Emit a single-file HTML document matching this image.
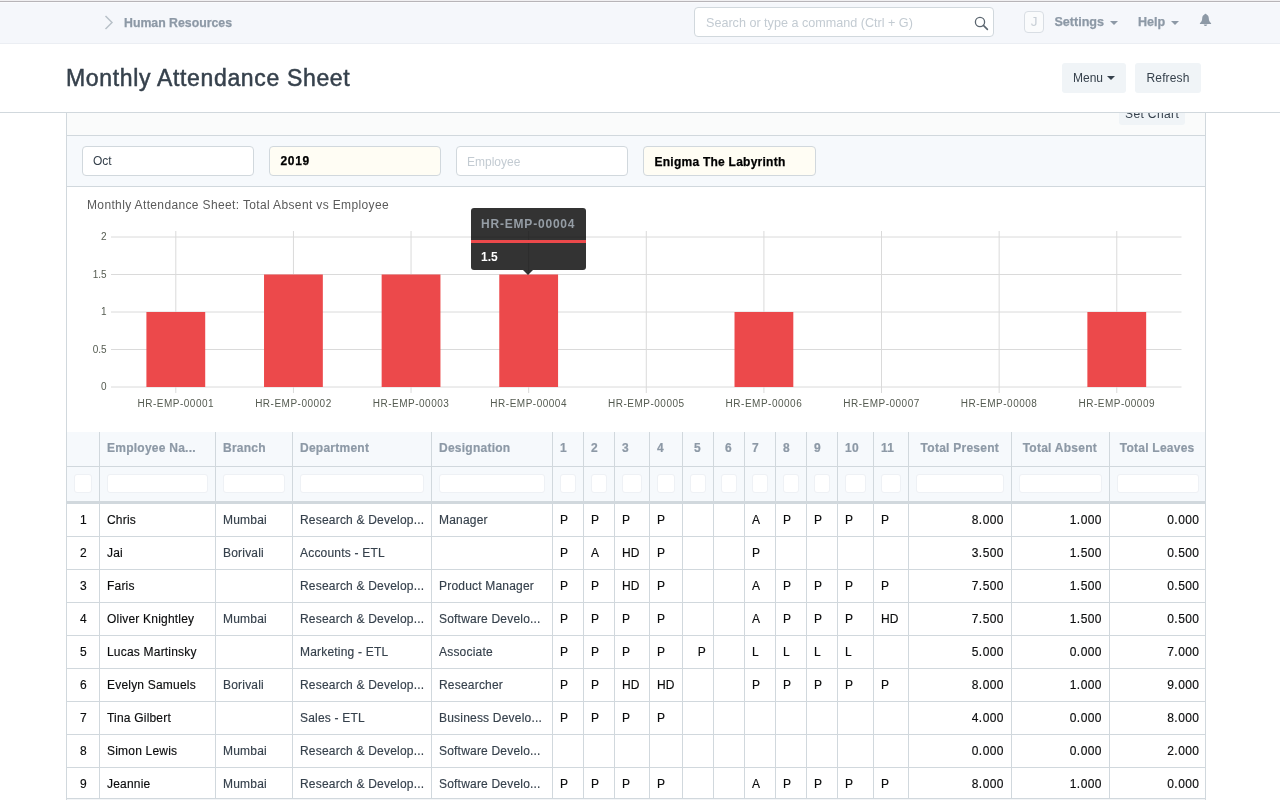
<!DOCTYPE html>
<html>
<head>
<meta charset="utf-8">
<title>Monthly Attendance Sheet</title>
<style>
*{box-sizing:border-box;margin:0;padding:0}
body{will-change:transform}
html,body{width:1280px;height:800px;overflow:hidden;background:#fff;font-family:"Liberation Sans",sans-serif;color:#36414c}
.abs{position:absolute}
#topline0{left:0;top:0;width:1280px;height:1px;background:#f0eff1}
#topline1{left:0;top:1px;width:1280px;height:1px;background:#b7b4b8}
#topline2{left:0;top:2px;width:1280px;height:1px;background:#fafbfd}
#navbar{left:0;top:3px;width:1280px;height:41px;background:#f5f7fb;border-bottom:1px solid #ebeef3}
.navtxt{-webkit-text-stroke:0.25px #8d99a6;font-weight:bold;font-size:12.6px;color:#8d99a6;white-space:nowrap;line-height:16px}
#search{left:694px;top:7px;width:300px;height:30px;background:#fff;border:1px solid #d1d8dd;border-radius:4px}
#search span{position:absolute;left:11px;top:7px;font-size:12.6px;color:#c3cbd2;white-space:nowrap;line-height:16px}
#avatar{left:1024px;top:11px;width:20px;height:22px;border:1px solid #d9dee4;border-radius:4px;background:#fafbfc;color:#c8cfd6;font-size:13.5px;text-align:center;line-height:19px}
.caret{position:absolute;width:0;height:0;border-left:4px solid transparent;border-right:4px solid transparent;border-top:4px solid #8d99a6}
#pagehead{left:0;top:44px;width:1280px;height:69px;background:#fff;border-bottom:1px solid #d1d8dd}
#title{left:66px;top:63px;font-size:23px;letter-spacing:0.66px;-webkit-text-stroke:0.5px #36414c;color:#36414c;white-space:nowrap;line-height:30px}
.btn{position:absolute;background:#f0f4f7;border-radius:3px;font-size:12px;color:#36414c;line-height:16px;white-space:nowrap}
#container{left:66px;top:113px;width:1140px;height:700px;border-left:1px solid #d1d8dd;border-right:1px solid #d1d8dd;background:#fff}
#setchartbar{left:67px;top:113px;width:1138px;height:23px;background:#fafbfb;border-bottom:1px solid #d1d8dd;overflow:hidden}
#filters{left:67px;top:136px;width:1138px;height:51px;background:#f6f9fc;border-bottom:1px solid #d1d8dd}
.inp{position:absolute;top:10px;width:172px;height:30px;background:#fff;border:1px solid #d1d8dd;border-radius:4px;font-size:12px;line-height:16px;padding:6px 10px;white-space:nowrap;color:#36414c}
.inp.req{background:#fffdf4;font-weight:bold;color:#000;letter-spacing:0.25px;-webkit-text-stroke:0.25px #000;padding-left:10.5px}
.inp.ph{color:#c3cbd2}
#charttitle{left:87px;top:197px;font-size:12px;letter-spacing:0.36px;color:#5a5a5a;line-height:16px;white-space:nowrap}

#tip{left:471px;top:208px;width:115px;height:62px;background:rgba(0,0,0,0.8);border-radius:3px;color:#fff}
#tiptitle{position:absolute;left:10px;top:8px;font-size:12px;letter-spacing:0.8px;font-weight:bold;color:#959da5;line-height:16px;white-space:nowrap}
#tipline{position:absolute;left:0;top:32px;width:115px;height:3px;background:#ec494b}
#tipval{position:absolute;left:10px;top:41px;font-size:12px;font-weight:bold;color:#fff;line-height:16px}
#tiparrow{position:absolute;left:52px;top:62px;width:0;height:0;border-left:5px solid transparent;border-right:5px solid transparent;border-top:5px solid rgba(0,0,0,0.8)}
#thead{left:67px;top:432px;width:1138px;height:69px;background:#f6f9fc;border-bottom:0}
#thead:after{content:"";position:absolute;left:0;top:34px;width:1138px;height:1px;background:#d1d8dd}
#thickline{left:67px;top:501px;width:1138px;height:3px;background:#d1d8dd}
.hc{-webkit-text-stroke:0.2px #8d99a6;top:432px;height:34px;padding:8px 7px 0 7px;letter-spacing:0.25px;font-size:12px;font-weight:bold;color:#8d99a6;line-height:16px;white-space:nowrap;overflow:hidden}
.fi{top:474px;height:19px;background:#fff;border:1px solid #eef1f5;border-radius:3px}
.tc{-webkit-text-stroke:0.15px currentColor;height:32px;padding:8px 7px 0 7px;letter-spacing:0.2px;font-size:12px;line-height:16px;white-space:nowrap;overflow:hidden;color:#36414c}
.tc.blk{color:#0b0c0d}
.tc.idx{text-align:center;padding-left:0;padding-right:0}
.r{text-align:right}
.hc.hr{text-align:right;padding-right:12px}
.tc.num{letter-spacing:0.45px;padding-right:7px}
.xl{letter-spacing:0.5px}
.rline{left:67px;width:1138px;height:1px;background:#d1d8dd}
.vline{top:432px;width:1px;height:366px;background:#d1d8dd}
</style>
</head>
<body>
<div class="abs" id="topline0"></div>
<div class="abs" id="topline1"></div>
<div class="abs" id="topline2"></div>
<div class="abs" id="navbar"></div>
<svg class="abs" style="left:104px;top:15px" width="10" height="15" viewBox="0 0 10 15"><path d="M1.5 1 L8 7.5 L1.5 14" fill="none" stroke="#b9c1c9" stroke-width="1.5"/></svg>
<div class="abs navtxt" id="crumb" style="left:124px;top:15px;font-size:12.3px">Human Resources</div>
<div class="abs" id="search"><span>Search or type a command (Ctrl + G)</span>
<svg style="position:absolute;left:279px;top:7.5px" width="15" height="15" viewBox="0 0 15 15"><circle cx="6" cy="6" r="4.6" fill="none" stroke="#5b6670" stroke-width="1.3"/><path d="M9.4 9.4 L13.4 13.4" stroke="#5b6670" stroke-width="1.6" stroke-linecap="round"/></svg>
</div>
<div class="abs" id="avatar">J</div>
<div class="abs navtxt" id="settings" style="left:1054.4px;top:14px">Settings</div>
<div class="caret" style="left:1110px;top:21px"></div>
<div class="abs navtxt" id="help" style="left:1138px;top:14px">Help</div>
<div class="caret" style="left:1171px;top:21px"></div>
<svg class="abs" style="left:1198.6px;top:13px" width="13" height="14" viewBox="0 0 13 14"><path d="M6.5 0.8 C7.2 0.8 7.6 1.2 7.7 1.8 C9.1 2.4 9.7 3.7 9.8 5.2 C9.9 7.4 10.3 8.6 12.1 10.2 L12.1 11 L0.9 11 L0.9 10.2 C2.7 8.6 3.1 7.4 3.2 5.2 C3.3 3.7 3.9 2.4 5.3 1.8 C5.4 1.2 5.8 0.8 6.5 0.8 Z M4.7 11.5 L8.3 11.5 C8.2 12.4 7.4 13 6.5 13 C5.6 13 4.8 12.4 4.7 11.5 Z" fill="#8d99a6"/></svg>

<div class="abs" id="pagehead"></div>
<div class="abs" id="title">Monthly Attendance Sheet</div>
<div class="btn" id="menubtn" style="left:1062px;top:63px;width:64px;height:30px;padding:7px 0 0 11px">Menu</div>
<div class="caret" style="left:1107px;top:76px;border-top-color:#36414c"></div>
<div class="btn" id="refreshbtn" style="left:1135px;top:63px;width:66px;height:30px;padding:7px 0 0 11.5px;letter-spacing:0.15px">Refresh</div>

<div class="abs" id="container"></div>
<div class="abs" id="setchartbar"><div class="btn" style="left:1052px;top:-12px;width:66px;height:24px;padding:5px 0 0 6px;letter-spacing:0.38px;background:#f0f4f7">Set Chart</div></div>
<div class="abs" id="filters">
  <div class="inp" style="left:15px">Oct</div>
  <div class="inp req" style="left:202px;letter-spacing:0.67px">2019</div>
  <div class="inp ph" style="left:389px;padding-top:7px">Employee</div>
  <div class="inp req" style="left:576px;width:173px;padding-top:7px">Enigma The Labyrinth</div>
</div>
<div class="abs" id="charttitle">Monthly Attendance Sheet: Total Absent vs Employee</div>
<svg class="abs" style="left:0;top:190px" width="1280" height="240" viewBox="0 190 1280 240" font-family="Liberation Sans, sans-serif">
<line x1="175.81" x2="175.81" y1="231" y2="393" stroke="#dadada" stroke-width="1"/>
<line x1="293.43" x2="293.43" y1="231" y2="393" stroke="#dadada" stroke-width="1"/>
<line x1="411.05" x2="411.05" y1="231" y2="393" stroke="#dadada" stroke-width="1"/>
<line x1="528.67" x2="528.67" y1="231" y2="393" stroke="#dadada" stroke-width="1"/>
<line x1="646.29" x2="646.29" y1="231" y2="393" stroke="#dadada" stroke-width="1"/>
<line x1="763.91" x2="763.91" y1="231" y2="393" stroke="#dadada" stroke-width="1"/>
<line x1="881.53" x2="881.53" y1="231" y2="393" stroke="#dadada" stroke-width="1"/>
<line x1="999.15" x2="999.15" y1="231" y2="393" stroke="#dadada" stroke-width="1"/>
<line x1="1116.77" x2="1116.77" y1="231" y2="393" stroke="#dadada" stroke-width="1"/>
<line x1="111" x2="1181.5" y1="237" y2="237" stroke="#dadada" stroke-width="1"/>
<text x="106.6" y="240" font-size="10" fill="#555b51" text-anchor="end">2</text>
<line x1="111" x2="1181.5" y1="274.5" y2="274.5" stroke="#dadada" stroke-width="1"/>
<text x="106.6" y="277.5" font-size="10" fill="#555b51" text-anchor="end">1.5</text>
<line x1="111" x2="1181.5" y1="312" y2="312" stroke="#dadada" stroke-width="1"/>
<text x="106.6" y="315" font-size="10" fill="#555b51" text-anchor="end">1</text>
<line x1="111" x2="1181.5" y1="349.5" y2="349.5" stroke="#dadada" stroke-width="1"/>
<text x="106.6" y="352.5" font-size="10" fill="#555b51" text-anchor="end">0.5</text>
<line x1="111" x2="1181.5" y1="387" y2="387" stroke="#dadada" stroke-width="1"/>
<text x="106.6" y="390" font-size="10" fill="#555b51" text-anchor="end">0</text>
<rect x="146.41" y="312.00" width="58.8" height="75.00" fill="#ec494b"/>
<rect x="264.03" y="274.50" width="58.8" height="112.50" fill="#ec494b"/>
<rect x="381.65" y="274.50" width="58.8" height="112.50" fill="#ec494b"/>
<rect x="499.27" y="274.50" width="58.8" height="112.50" fill="#ec494b"/>
<rect x="734.51" y="312.00" width="58.8" height="75.00" fill="#ec494b"/>
<rect x="1087.37" y="312.00" width="58.8" height="75.00" fill="#ec494b"/>
<text x="175.81" y="407" font-size="10" fill="#555b51" text-anchor="middle" class="xl">HR-EMP-00001</text>
<text x="293.43" y="407" font-size="10" fill="#555b51" text-anchor="middle" class="xl">HR-EMP-00002</text>
<text x="411.05" y="407" font-size="10" fill="#555b51" text-anchor="middle" class="xl">HR-EMP-00003</text>
<text x="528.67" y="407" font-size="10" fill="#555b51" text-anchor="middle" class="xl">HR-EMP-00004</text>
<text x="646.29" y="407" font-size="10" fill="#555b51" text-anchor="middle" class="xl">HR-EMP-00005</text>
<text x="763.91" y="407" font-size="10" fill="#555b51" text-anchor="middle" class="xl">HR-EMP-00006</text>
<text x="881.53" y="407" font-size="10" fill="#555b51" text-anchor="middle" class="xl">HR-EMP-00007</text>
<text x="999.15" y="407" font-size="10" fill="#555b51" text-anchor="middle" class="xl">HR-EMP-00008</text>
<text x="1116.77" y="407" font-size="10" fill="#555b51" text-anchor="middle" class="xl">HR-EMP-00009</text>
</svg>
<div class="abs" id="tip"><div id="tiptitle">HR-EMP-00004</div><div id="tipline"></div><div id="tipval">1.5</div><div id="tiparrow"></div></div>
<div class="abs" id="thead"></div>
<div class="abs" id="thickline"></div>
<div class="abs hc" style="left:68px;width:31px"></div>
<div class="abs fi" style="left:74px;width:18px"></div>
<div class="abs hc" style="left:100px;width:115px">Employee Na...</div>
<div class="abs fi" style="left:107px;width:100.5px"></div>
<div class="abs hc" style="left:216px;width:76px">Branch</div>
<div class="abs fi" style="left:223px;width:61.5px"></div>
<div class="abs hc" style="left:293px;width:138px">Department</div>
<div class="abs fi" style="left:300px;width:123.5px"></div>
<div class="abs hc" style="left:432px;width:120px">Designation</div>
<div class="abs fi" style="left:439px;width:105.5px"></div>
<div class="abs hc" style="left:553px;width:30px">1</div>
<div class="abs fi" style="left:560px;width:15.5px"></div>
<div class="abs hc" style="left:584px;width:30px">2</div>
<div class="abs fi" style="left:591px;width:15.5px"></div>
<div class="abs hc" style="left:615px;width:34px">3</div>
<div class="abs fi" style="left:622px;width:19.5px"></div>
<div class="abs hc" style="left:650px;width:32px">4</div>
<div class="abs fi" style="left:657px;width:17.5px"></div>
<div class="abs hc hr" style="left:683px;width:30px">5</div>
<div class="abs fi" style="left:690px;width:15.5px"></div>
<div class="abs hc hr" style="left:714px;width:30px">6</div>
<div class="abs fi" style="left:721px;width:15.5px"></div>
<div class="abs hc" style="left:745px;width:30px">7</div>
<div class="abs fi" style="left:752px;width:15.5px"></div>
<div class="abs hc" style="left:776px;width:30px">8</div>
<div class="abs fi" style="left:783px;width:15.5px"></div>
<div class="abs hc" style="left:807px;width:30px">9</div>
<div class="abs fi" style="left:814px;width:15.5px"></div>
<div class="abs hc" style="left:838px;width:35px">10</div>
<div class="abs fi" style="left:845px;width:20.5px"></div>
<div class="abs hc" style="left:874px;width:34px">11</div>
<div class="abs fi" style="left:881px;width:19.5px"></div>
<div class="abs hc hr" style="left:909px;width:102px">Total Present</div>
<div class="abs fi" style="left:916px;width:87.5px"></div>
<div class="abs hc hr" style="left:1012px;width:97px">Total Absent</div>
<div class="abs fi" style="left:1019px;width:82.5px"></div>
<div class="abs hc hr" style="left:1110px;width:96.5px">Total Leaves</div>
<div class="abs fi" style="left:1117px;width:82.0px"></div>
<div class="abs rline" style="top:536px"></div>
<div class="abs tc idx blk" style="left:68px;top:504px;width:31px">1</div>
<div class="abs tc blk" style="left:100px;top:504px;width:115px">Chris</div>
<div class="abs tc" style="left:216px;top:504px;width:76px">Mumbai</div>
<div class="abs tc" style="left:293px;top:504px;width:138px">Research & Develop...</div>
<div class="abs tc" style="left:432px;top:504px;width:120px">Manager</div>
<div class="abs tc blk" style="left:553px;top:504px;width:30px">P</div>
<div class="abs tc blk" style="left:584px;top:504px;width:30px">P</div>
<div class="abs tc blk" style="left:615px;top:504px;width:34px">P</div>
<div class="abs tc blk" style="left:650px;top:504px;width:32px">P</div>
<div class="abs tc blk" style="left:745px;top:504px;width:30px">A</div>
<div class="abs tc blk" style="left:776px;top:504px;width:30px">P</div>
<div class="abs tc blk" style="left:807px;top:504px;width:30px">P</div>
<div class="abs tc blk" style="left:838px;top:504px;width:35px">P</div>
<div class="abs tc blk" style="left:874px;top:504px;width:34px">P</div>
<div class="abs tc r num blk" style="left:909px;top:504px;width:102px">8.000</div>
<div class="abs tc r num blk" style="left:1012px;top:504px;width:97px">1.000</div>
<div class="abs tc r num blk" style="left:1110px;top:504px;width:96.5px">0.000</div>
<div class="abs rline" style="top:569px"></div>
<div class="abs tc idx blk" style="left:68px;top:537px;width:31px">2</div>
<div class="abs tc blk" style="left:100px;top:537px;width:115px">Jai</div>
<div class="abs tc" style="left:216px;top:537px;width:76px">Borivali</div>
<div class="abs tc" style="left:293px;top:537px;width:138px">Accounts - ETL</div>
<div class="abs tc blk" style="left:553px;top:537px;width:30px">P</div>
<div class="abs tc blk" style="left:584px;top:537px;width:30px">A</div>
<div class="abs tc blk" style="left:615px;top:537px;width:34px">HD</div>
<div class="abs tc blk" style="left:650px;top:537px;width:32px">P</div>
<div class="abs tc blk" style="left:745px;top:537px;width:30px">P</div>
<div class="abs tc r num blk" style="left:909px;top:537px;width:102px">3.500</div>
<div class="abs tc r num blk" style="left:1012px;top:537px;width:97px">1.500</div>
<div class="abs tc r num blk" style="left:1110px;top:537px;width:96.5px">0.500</div>
<div class="abs rline" style="top:602px"></div>
<div class="abs tc idx blk" style="left:68px;top:570px;width:31px">3</div>
<div class="abs tc blk" style="left:100px;top:570px;width:115px">Faris</div>
<div class="abs tc" style="left:293px;top:570px;width:138px">Research & Develop...</div>
<div class="abs tc" style="left:432px;top:570px;width:120px">Product Manager</div>
<div class="abs tc blk" style="left:553px;top:570px;width:30px">P</div>
<div class="abs tc blk" style="left:584px;top:570px;width:30px">P</div>
<div class="abs tc blk" style="left:615px;top:570px;width:34px">HD</div>
<div class="abs tc blk" style="left:650px;top:570px;width:32px">P</div>
<div class="abs tc blk" style="left:745px;top:570px;width:30px">A</div>
<div class="abs tc blk" style="left:776px;top:570px;width:30px">P</div>
<div class="abs tc blk" style="left:807px;top:570px;width:30px">P</div>
<div class="abs tc blk" style="left:838px;top:570px;width:35px">P</div>
<div class="abs tc blk" style="left:874px;top:570px;width:34px">P</div>
<div class="abs tc r num blk" style="left:909px;top:570px;width:102px">7.500</div>
<div class="abs tc r num blk" style="left:1012px;top:570px;width:97px">1.500</div>
<div class="abs tc r num blk" style="left:1110px;top:570px;width:96.5px">0.500</div>
<div class="abs rline" style="top:635px"></div>
<div class="abs tc idx blk" style="left:68px;top:603px;width:31px">4</div>
<div class="abs tc blk" style="left:100px;top:603px;width:115px">Oliver Knightley</div>
<div class="abs tc" style="left:216px;top:603px;width:76px">Mumbai</div>
<div class="abs tc" style="left:293px;top:603px;width:138px">Research & Develop...</div>
<div class="abs tc" style="left:432px;top:603px;width:120px">Software Develo...</div>
<div class="abs tc blk" style="left:553px;top:603px;width:30px">P</div>
<div class="abs tc blk" style="left:584px;top:603px;width:30px">P</div>
<div class="abs tc blk" style="left:615px;top:603px;width:34px">P</div>
<div class="abs tc blk" style="left:650px;top:603px;width:32px">P</div>
<div class="abs tc blk" style="left:745px;top:603px;width:30px">A</div>
<div class="abs tc blk" style="left:776px;top:603px;width:30px">P</div>
<div class="abs tc blk" style="left:807px;top:603px;width:30px">P</div>
<div class="abs tc blk" style="left:838px;top:603px;width:35px">P</div>
<div class="abs tc blk" style="left:874px;top:603px;width:34px">HD</div>
<div class="abs tc r num blk" style="left:909px;top:603px;width:102px">7.500</div>
<div class="abs tc r num blk" style="left:1012px;top:603px;width:97px">1.500</div>
<div class="abs tc r num blk" style="left:1110px;top:603px;width:96.5px">0.500</div>
<div class="abs rline" style="top:668px"></div>
<div class="abs tc idx blk" style="left:68px;top:636px;width:31px">5</div>
<div class="abs tc blk" style="left:100px;top:636px;width:115px">Lucas Martinsky</div>
<div class="abs tc" style="left:293px;top:636px;width:138px">Marketing - ETL</div>
<div class="abs tc" style="left:432px;top:636px;width:120px">Associate</div>
<div class="abs tc blk" style="left:553px;top:636px;width:30px">P</div>
<div class="abs tc blk" style="left:584px;top:636px;width:30px">P</div>
<div class="abs tc blk" style="left:615px;top:636px;width:34px">P</div>
<div class="abs tc blk" style="left:650px;top:636px;width:32px">P</div>
<div class="abs tc r blk" style="left:683px;top:636px;width:30px">P</div>
<div class="abs tc blk" style="left:745px;top:636px;width:30px">L</div>
<div class="abs tc blk" style="left:776px;top:636px;width:30px">L</div>
<div class="abs tc blk" style="left:807px;top:636px;width:30px">L</div>
<div class="abs tc blk" style="left:838px;top:636px;width:35px">L</div>
<div class="abs tc r num blk" style="left:909px;top:636px;width:102px">5.000</div>
<div class="abs tc r num blk" style="left:1012px;top:636px;width:97px">0.000</div>
<div class="abs tc r num blk" style="left:1110px;top:636px;width:96.5px">7.000</div>
<div class="abs rline" style="top:701px"></div>
<div class="abs tc idx blk" style="left:68px;top:669px;width:31px">6</div>
<div class="abs tc blk" style="left:100px;top:669px;width:115px">Evelyn Samuels</div>
<div class="abs tc" style="left:216px;top:669px;width:76px">Borivali</div>
<div class="abs tc" style="left:293px;top:669px;width:138px">Research & Develop...</div>
<div class="abs tc" style="left:432px;top:669px;width:120px">Researcher</div>
<div class="abs tc blk" style="left:553px;top:669px;width:30px">P</div>
<div class="abs tc blk" style="left:584px;top:669px;width:30px">P</div>
<div class="abs tc blk" style="left:615px;top:669px;width:34px">HD</div>
<div class="abs tc blk" style="left:650px;top:669px;width:32px">HD</div>
<div class="abs tc blk" style="left:745px;top:669px;width:30px">P</div>
<div class="abs tc blk" style="left:776px;top:669px;width:30px">P</div>
<div class="abs tc blk" style="left:807px;top:669px;width:30px">P</div>
<div class="abs tc blk" style="left:838px;top:669px;width:35px">P</div>
<div class="abs tc blk" style="left:874px;top:669px;width:34px">P</div>
<div class="abs tc r num blk" style="left:909px;top:669px;width:102px">8.000</div>
<div class="abs tc r num blk" style="left:1012px;top:669px;width:97px">1.000</div>
<div class="abs tc r num blk" style="left:1110px;top:669px;width:96.5px">9.000</div>
<div class="abs rline" style="top:734px"></div>
<div class="abs tc idx blk" style="left:68px;top:702px;width:31px">7</div>
<div class="abs tc blk" style="left:100px;top:702px;width:115px">Tina Gilbert</div>
<div class="abs tc" style="left:293px;top:702px;width:138px">Sales - ETL</div>
<div class="abs tc" style="left:432px;top:702px;width:120px">Business Develo...</div>
<div class="abs tc blk" style="left:553px;top:702px;width:30px">P</div>
<div class="abs tc blk" style="left:584px;top:702px;width:30px">P</div>
<div class="abs tc blk" style="left:615px;top:702px;width:34px">P</div>
<div class="abs tc blk" style="left:650px;top:702px;width:32px">P</div>
<div class="abs tc r num blk" style="left:909px;top:702px;width:102px">4.000</div>
<div class="abs tc r num blk" style="left:1012px;top:702px;width:97px">0.000</div>
<div class="abs tc r num blk" style="left:1110px;top:702px;width:96.5px">8.000</div>
<div class="abs rline" style="top:767px"></div>
<div class="abs tc idx blk" style="left:68px;top:735px;width:31px">8</div>
<div class="abs tc blk" style="left:100px;top:735px;width:115px">Simon Lewis</div>
<div class="abs tc" style="left:216px;top:735px;width:76px">Mumbai</div>
<div class="abs tc" style="left:293px;top:735px;width:138px">Research & Develop...</div>
<div class="abs tc" style="left:432px;top:735px;width:120px">Software Develo...</div>
<div class="abs tc r num blk" style="left:909px;top:735px;width:102px">0.000</div>
<div class="abs tc r num blk" style="left:1012px;top:735px;width:97px">0.000</div>
<div class="abs tc r num blk" style="left:1110px;top:735px;width:96.5px">2.000</div>
<div class="abs rline" style="top:798px"></div>
<div class="abs" style="left:67px;top:799px;width:1138px;height:1px;background:#f3f5f7"></div>
<div class="abs tc idx blk" style="left:68px;top:768px;width:31px">9</div>
<div class="abs tc blk" style="left:100px;top:768px;width:115px">Jeannie</div>
<div class="abs tc" style="left:216px;top:768px;width:76px">Mumbai</div>
<div class="abs tc" style="left:293px;top:768px;width:138px">Research & Develop...</div>
<div class="abs tc" style="left:432px;top:768px;width:120px">Software Develo...</div>
<div class="abs tc blk" style="left:553px;top:768px;width:30px">P</div>
<div class="abs tc blk" style="left:584px;top:768px;width:30px">P</div>
<div class="abs tc blk" style="left:615px;top:768px;width:34px">P</div>
<div class="abs tc blk" style="left:650px;top:768px;width:32px">P</div>
<div class="abs tc blk" style="left:745px;top:768px;width:30px">A</div>
<div class="abs tc blk" style="left:776px;top:768px;width:30px">P</div>
<div class="abs tc blk" style="left:807px;top:768px;width:30px">P</div>
<div class="abs tc blk" style="left:838px;top:768px;width:35px">P</div>
<div class="abs tc blk" style="left:874px;top:768px;width:34px">P</div>
<div class="abs tc r num blk" style="left:909px;top:768px;width:102px">8.000</div>
<div class="abs tc r num blk" style="left:1012px;top:768px;width:97px">1.000</div>
<div class="abs tc r num blk" style="left:1110px;top:768px;width:96.5px">0.000</div>
<div class="abs vline" style="left:99px"></div>
<div class="abs vline" style="left:215px"></div>
<div class="abs vline" style="left:292px"></div>
<div class="abs vline" style="left:431px"></div>
<div class="abs vline" style="left:552px"></div>
<div class="abs vline" style="left:583px"></div>
<div class="abs vline" style="left:614px"></div>
<div class="abs vline" style="left:649px"></div>
<div class="abs vline" style="left:682px"></div>
<div class="abs vline" style="left:713px"></div>
<div class="abs vline" style="left:744px"></div>
<div class="abs vline" style="left:775px"></div>
<div class="abs vline" style="left:806px"></div>
<div class="abs vline" style="left:837px"></div>
<div class="abs vline" style="left:873px"></div>
<div class="abs vline" style="left:908px"></div>
<div class="abs vline" style="left:1011px"></div>
<div class="abs vline" style="left:1109px"></div>
</body>
</html>
